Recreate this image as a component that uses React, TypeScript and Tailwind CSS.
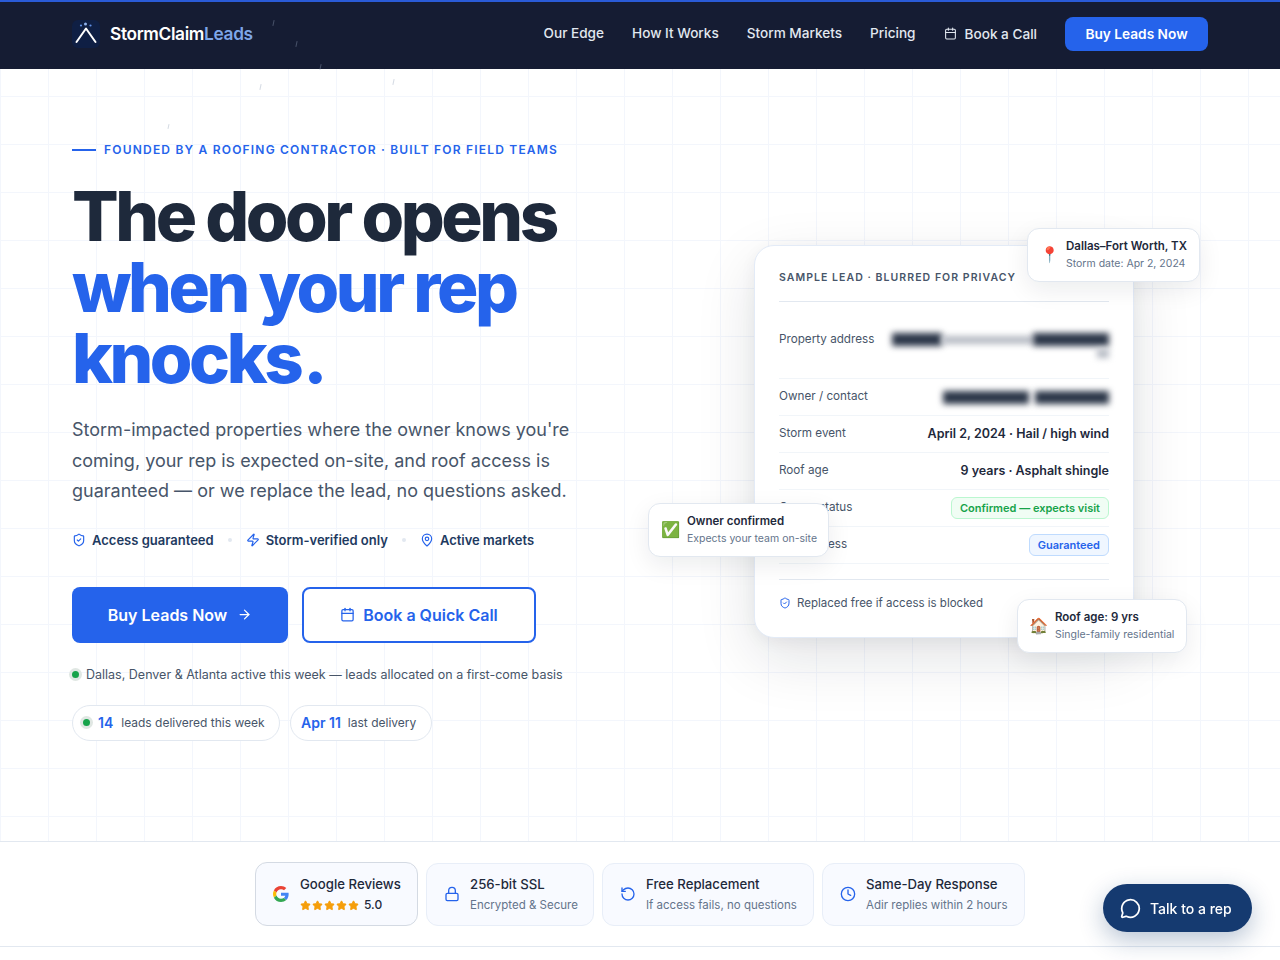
import { ArrowRight, Calendar, Clock, Lock, MapPin, MessageCircle, RotateCcw, ShieldCheck, Star, Zap } from "lucide-react";
import React from "react";

const navLinks = ["Our Edge", "How It Works", "Storm Markets", "Pricing"];

const streaks = [
  "left-[273px] top-[20px] h-[6px]",
  "left-[296px] top-[41px] h-[6px]",
  "left-[320px] top-[64px] h-[6px]",
  "left-[260px] top-[84px] h-[6px]",
  "left-[393px] top-[79px] h-[6px]",
  "left-[168px] top-[124px] h-[5px]",
];

const trustItems = [
  { icon: <Lock className="h-[16px] w-[16px]" />, title: "256-bit SSL", sub: "Encrypted & Secure", width: "w-[168px]" },
  { icon: <RotateCcw className="h-[16px] w-[16px]" />, title: "Free Replacement", sub: "If access fails, no questions", width: "w-[212px]" },
  { icon: <Clock className="h-[16px] w-[16px]" />, title: "Same-Day Response", sub: "Adir replies within 2 hours", width: "w-[203px]" },
];

function Logo() {
  return (
    <div className="flex items-center gap-[10px]">
      <div className="flex h-[28px] w-[28px] items-center justify-center rounded-[6px] bg-[#0f1f44]">
        <svg width="28" height="28" viewBox="0 0 28 28" fill="none">
          <path d="M4.500 22 14 8.500 23.500 22" stroke="#fff" strokeWidth="2" strokeLinecap="round" strokeLinejoin="round" />
          <circle cx="13.500" cy="4" r="1.500" fill="#8fb3ee" />
          <circle cx="9" cy="5.500" r="1.100" fill="#5f8fe6" />
          <circle cx="18.500" cy="5.500" r="1.100" fill="#5f8fe6" />
        </svg>
      </div>
      <span className="text-[17.3px] font-semibold tracking-[-0.02em] text-white">
        StormClaim<span className="text-[#7ea6e8]">Leads</span>
      </span>
    </div>
  );
}

function Header() {
  return (
    <header className="relative h-[69px] border-t-2 border-[#2a5bd7] bg-[#151c33]">
      <div className="mx-auto flex h-full w-[1136px] items-center justify-between pb-[3px]">
        <Logo />
        <nav className="flex items-center gap-[28px] text-[13.6px] font-medium text-[#e2e8f0]">
          {navLinks.map((link) => (
            <a key={link} className="-mt-[1px]">
              {link}
            </a>
          ))}
          <a className="flex items-center gap-[8px]">
            <Calendar className="h-[13px] w-[13px]" />
            Book a Call
          </a>
          <a className="flex h-[34px] w-[143px] items-center justify-center rounded-[8px] bg-[#2563eb] text-[13.7px] font-semibold text-white">
            Buy Leads Now
          </a>
        </nav>
      </div>
    </header>
  );
}

function Row({ label, children, className = "h-[37px]" }: { label: string; children: React.ReactNode; className?: string }) {
  return (
    <div className={`flex items-center justify-between border-b border-[#f1f5f9] ${className}`}>
      <span className="text-[11.7px] text-[#475569]">{label}</span>
      {children}
    </div>
  );
}

function Blurred({ className }: { className: string }) {
  return <span className={`block blur-[3px] ${className}`} />;
}

function FloatCard({ className, emoji, title, sub }: { className: string; emoji: string; title: string; sub: string }) {
  return (
    <div className={`absolute flex items-center gap-[7px] rounded-[12px] border border-[#e2e8f0] bg-white shadow-[0_8px_24px_rgba(15,23,42,0.08)] ${className}`}>
      <span className="text-[15.5px] leading-none">{emoji}</span>
      <div>
        <p className="text-[11.5px] font-semibold leading-[18px] text-[#1e293b]">{title}</p>
        <p className="text-[10.5px] leading-[18px] text-[#64748b]">{sub}</p>
      </div>
    </div>
  );
}

function LeadCard() {
  const valueClass = "text-[12.5px] font-semibold text-[#1e293b]";
  return (
    <div className="relative ml-[167px] mt-[103px] w-[380px] shrink-0">
      <div className="rounded-[20px] border border-[#e3ebf7] bg-white px-[24px] pb-[26px] pt-[25px] shadow-[0_20px_60px_rgba(15,23,42,0.12),0_4px_16px_rgba(15,23,42,0.05)]">
        <div className="border-b border-[#e2e8f0] pb-[16px] text-[10.5px] font-semibold leading-[14px] tracking-[0.1em] text-[#475569]">
          SAMPLE LEAD · BLURRED FOR PRIVACY
        </div>
        <Row label="Property address" className="h-[77px]">
          <div className="relative -mt-[1px] flex w-[217px] items-center">
            <Blurred className="h-[13px] w-[50px] bg-[#2b3648]" />
            <Blurred className="h-[8px] w-[91px] bg-[#b5bac3]" />
            <Blurred className="h-[13px] w-[76px] bg-[#2b3648]" />
            <Blurred className="absolute right-0 top-[16px] h-[9px] w-[12px] bg-[#b5bac3]" />
          </div>
        </Row>
        <Row label="Owner / contact">
          <div className="flex gap-[6px]">
            <Blurred className="h-[13px] w-[86px] bg-[#2b3648]" />
            <Blurred className="h-[13px] w-[74px] bg-[#2b3648]" />
          </div>
        </Row>
        <Row label="Storm event">
          <span className={valueClass}>April 2, 2024 · Hail / high wind</span>
        </Row>
        <Row label="Roof age">
          <span className={valueClass}>9 years · Asphalt shingle</span>
        </Row>
        <Row label="Owner status">
          <span className="rounded-[6px] border border-[#bbf7d0] bg-[#f0fdf4] px-[8px] py-[2px] text-[11px] font-semibold leading-[16px] text-[#16a34a]">
            Confirmed — expects visit
          </span>
        </Row>
        <Row label="Roof access">
          <span className="rounded-[6px] border border-[#bfdbfe] bg-[#eff6ff] px-[8px] py-[2px] text-[11px] font-semibold leading-[16px] text-[#2563eb]">
            Guaranteed
          </span>
        </Row>
        <div className="mt-[15px] flex items-center gap-[6px] border-t border-[#e2e8f0] pt-[15px] text-[11.5px] leading-[16px] text-[#475569]">
          <ShieldCheck className="h-[12px] w-[12px] text-[#2563eb]" />
          Replaced free if access is blocked
        </div>
      </div>
      <FloatCard className="right-[-66px] top-[-17px] h-[54px] w-[173px] pl-[12px]" emoji="📍" title="Dallas–Fort Worth, TX" sub="Storm date: Apr 2, 2024" />
      <FloatCard className="left-[-106px] top-[258px] h-[54px] w-[181px] pl-[12px]" emoji="✅" title="Owner confirmed" sub="Expects your team on-site" />
      <FloatCard className="right-[-53px] top-[354px] h-[54px] w-[170px] pl-[11px]" emoji="🏠" title="Roof age: 9 yrs" sub="Single-family residential" />
    </div>
  );
}

function Hero() {
  return (
    <section className="mx-auto flex h-[772px] w-[1136px] items-start pt-[73px]">
      <div className="w-[515px] shrink-0">
        <div className="flex items-center gap-[8px] text-[12px] font-semibold leading-[16px] tracking-[0.1em] text-[#2563eb]">
          <span className="h-[2px] w-[24px] bg-[#2563eb]" />
          FOUNDED BY A ROOFING CONTRACTOR · BUILT FOR FIELD TEAMS
        </div>
        <h1 className="mt-[23px] text-[69px] font-extrabold leading-[71px] tracking-[-0.05em] text-[#1e293b]">
          The door opens
          <br />
          <span className="text-[#2563eb]">
            when your rep
            <br />
            knocks<span className="ml-[3px]">.</span>
          </span>
        </h1>
        <p className="mt-[21px] text-[18px] leading-[30.6px] text-[#475569]">
          Storm-impacted properties where the owner knows you're coming, your rep is expected on-site, and roof access is guaranteed — or we replace the lead, no questions asked.
        </p>
        <div className="mt-[23px] flex items-center text-[13px] font-semibold leading-[20px] text-[#1e3a5f]">
          <ShieldCheck className="h-[14px] w-[14px] text-[#2563eb]" />
          <span className="ml-[6px]">Access guaranteed</span>
          <span className="mx-[14px] h-[4px] w-[4px] rounded-full bg-[#e2e8f0]" />
          <Zap className="h-[14px] w-[14px] text-[#2563eb]" />
          <span className="ml-[6px]">Storm-verified only</span>
          <span className="mx-[14px] h-[4px] w-[4px] rounded-full bg-[#e2e8f0]" />
          <MapPin className="h-[14px] w-[14px] text-[#2563eb]" />
          <span className="ml-[6px]">Active markets</span>
        </div>
        <div className="mt-[37px] flex gap-[14px]">
          <a className="flex h-[56px] w-[216px] items-center justify-center gap-[10px] rounded-[8px] bg-[#2563eb] text-[16px] font-semibold text-white">
            Buy Leads Now
            <ArrowRight className="h-[15px] w-[15px]" />
          </a>
          <a className="flex h-[56px] w-[234px] items-center justify-center gap-[8px] rounded-[8px] border-2 border-[#2563eb] bg-white text-[16px] font-semibold text-[#2563eb]">
            <Calendar className="h-[15px] w-[15px]" />
            Book a Quick Call
          </a>
        </div>
        <div className="mt-[23px] flex w-[520px] items-center whitespace-nowrap text-[12.5px] leading-[18px] text-[#475569]">
          <span className="mr-[7px] h-[7px] w-[7px] rounded-full bg-[#16a34a] ring-[3px] ring-[#e0e7e3]" />
          Dallas, Denver & Atlanta active this week — leads allocated on a first-come basis
        </div>
        <div className="mt-[21px] flex gap-[10px]">
          <div className="flex h-[36px] w-[208px] items-center rounded-full border border-[#e2e8f0] bg-white pl-[10px] text-[12px] text-[#475569]">
            <span className="mr-[8px] h-[7px] w-[7px] rounded-full bg-[#16a34a] ring-[3px] ring-[#e0e7e3]" />
            <b className="mr-[8px] text-[14px] font-semibold text-[#2563eb]">14</b>
            leads delivered this week
          </div>
          <div className="flex h-[36px] w-[142px] items-center rounded-full border border-[#e2e8f0] bg-white pl-[10px] text-[12px] text-[#475569]">
            <b className="mr-[7px] text-[14px] font-semibold text-[#2563eb]">Apr 11</b>
            last delivery
          </div>
        </div>
      </div>
      <LeadCard />
    </section>
  );
}

function GoogleMark() {
  return (
    <svg width="16" height="16" viewBox="0 0 48 48">
      <path fill="#EA4335" d="M24 9.500c3.500 0 6.700 1.300 9.100 3.500l6.800-6.800C35.800 2.400 30.300 0 24 0 14.600 0 6.500 5.400 2.600 13.200l7.900 6.100C12.400 13.600 17.700 9.500 24 9.500z" />
      <path fill="#4285F4" d="M46.900 24.500c0-1.600-.1-3.100-.4-4.500H24v9h12.900c-.6 3-2.200 5.500-4.700 7.200l7.600 5.900c4.500-4.100 7.100-10.200 7.100-17.600z" />
      <path fill="#FBBC05" d="M10.500 28.700c-.5-1.400-.8-3-.8-4.700s.3-3.200.8-4.700l-7.900-6.100C.9 16.500 0 20.100 0 24s.9 7.500 2.600 10.800l7.900-6.100z" />
      <path fill="#34A853" d="M24 48c6.300 0 11.800-2.100 15.800-5.800l-7.600-5.900c-2.100 1.400-4.900 2.300-8.200 2.300-6.300 0-11.600-4.100-13.500-9.800l-7.900 6.100C6.500 42.600 14.600 48 24 48z" />
    </svg>
  );
}

function TrustBar() {
  return (
    <section className="flex h-[106px] items-center justify-center gap-[8px] border-y border-[#e2e8f0] bg-white">
      <div className="-mt-[1px] flex h-[64px] w-[163px] items-center gap-[11px] rounded-[12px] border border-[#d4dae3] bg-[#f8faff] pl-[17px]">
        <GoogleMark />
        <div>
          <p className="text-[13.2px] font-medium leading-[22px] text-[#1e293b]">Google Reviews</p>
          <div className="mt-[1px] flex items-center">
            <div className="flex gap-[1px]">
              {[0, 1, 2, 3, 4].map((n) => (
                <Star key={n} className="h-[11px] w-[11px] fill-[#f59e0b] text-[#f59e0b]" />
              ))}
            </div>
            <span className="ml-[5px] text-[12px] font-medium leading-[18px] text-[#1e293b]">5.0</span>
          </div>
        </div>
      </div>
      {trustItems.map((item) => (
        <div key={item.title} className={`flex h-[63px] items-center gap-[10px] rounded-[12px] border border-[#e8eef8] bg-[#f8faff] pl-[17px] ${item.width}`}>
          <span className="text-[#2563eb]">{item.icon}</span>
          <div>
            <p className="text-[13.2px] font-medium leading-[22px] text-[#1e293b]">{item.title}</p>
            <p className="text-[11.5px] leading-[20px] text-[#64748b]">{item.sub}</p>
          </div>
        </div>
      ))}
    </section>
  );
}

export default function App() {
  return (
    <div className="relative min-h-screen overflow-hidden bg-white bg-[linear-gradient(to_right,#f3f6fc_1px,transparent_1px),linear-gradient(to_bottom,#f3f6fc_1px,transparent_1px)] bg-[size:48px_48px] font-['Inter',sans-serif]">
      <Header />
      {streaks.map((streak) => (
        <span key={streak} className={`pointer-events-none absolute w-px rotate-[12deg] bg-[#94a3b8]/40 ${streak}`} />
      ))}
      <Hero />
      <TrustBar />
      <div className="h-[14px] bg-white" />
      <a className="fixed bottom-[28px] right-[28px] flex h-[48px] w-[149px] items-center gap-[9px] rounded-full bg-[#153a70] pl-[17px] text-[14px] font-medium text-white shadow-[0_8px_24px_rgba(21,58,112,0.3)]">
        <MessageCircle className="h-[21px] w-[21px]" />
        Talk to a rep
      </a>
    </div>
  );
}
